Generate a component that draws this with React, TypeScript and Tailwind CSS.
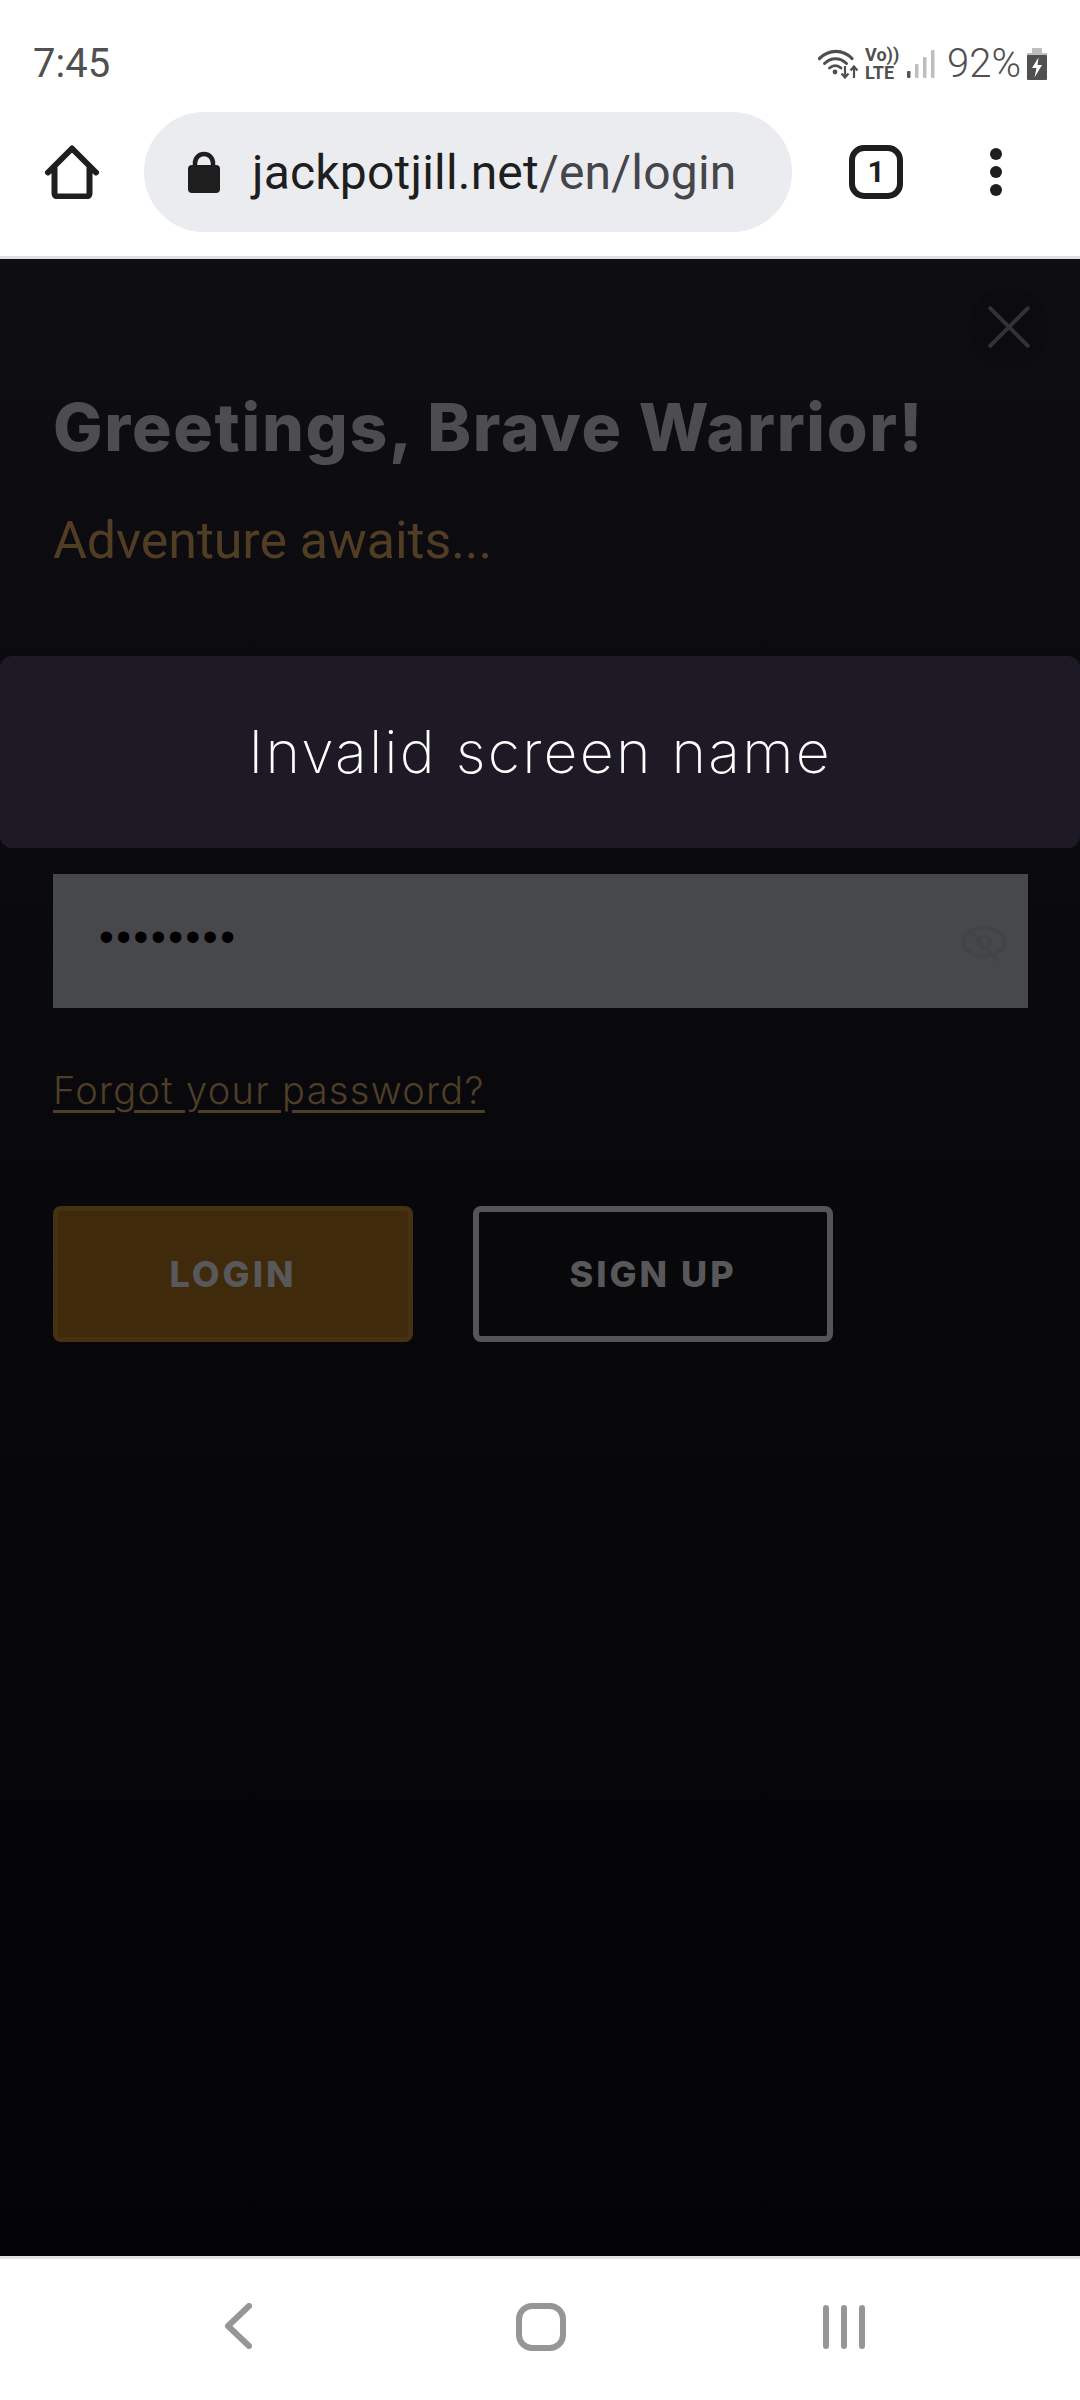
import React from "react";

const inter = "font-['Inter',sans-serif]";
const roboto = "font-['Roboto',sans-serif]";

function Wifi() {
  return (
    <svg width="40" height="30" viewBox="0 0 40 30" fill="none" className="text-[#4f4f4f]">
      <path d="M1.5 9.5C11 0 25 0 34 9.5" stroke="currentColor" strokeWidth="3.2" strokeLinecap="round" />
      <path d="M6.5 14.5C13 8 22 8 28.5 14.5" stroke="currentColor" strokeWidth="3" strokeLinecap="round" />
      <path d="M11.5 19C15 16 19.5 16 23 19" stroke="currentColor" strokeWidth="2.8" strokeLinecap="round" />
      <circle cx="17" cy="23" r="2.4" fill="currentColor" />
      <path d="M27 17v11M23.5 24.5L27 28.5l3.500-4" stroke="currentColor" strokeWidth="2.2" />
      <path d="M36 29V18M32.500 21.500L36 17.500l3.500 4" stroke="currentColor" strokeWidth="2.2" />
    </svg>
  );
}

function Signal() {
  return (
    <svg width="28" height="30" viewBox="0 0 28 30">
      <rect x="0" y="22" width="3.500" height="7" rx="1" fill="#555555" />
      <rect x="8" y="15" width="3.500" height="14" rx="1" fill="#bdbdbd" />
      <rect x="16" y="8" width="3.500" height="21" rx="1" fill="#bdbdbd" />
      <rect x="24" y="1" width="3.500" height="28" rx="1" fill="#bdbdbd" />
    </svg>
  );
}

function Battery() {
  return (
    <svg width="20" height="32" viewBox="0 0 20 32">
      <rect x="5" y="0" width="10" height="5" fill="#bdbdbd" />
      <rect x="0" y="5" width="20" height="4" fill="#bdbdbd" />
      <rect x="0" y="7" width="20" height="25" rx="1" fill="#505050" />
      <path d="M11.500 9.500L5 20h4.500L7.500 29.500 15 17h-4.500z" fill="#ffffff" />
    </svg>
  );
}

function Home() {
  return (
    <svg width="54" height="54" viewBox="0 0 54 54" fill="none">
      <path
        d="M3 27.500L27 3.500l24 24M9.500 23v25.500a3 3 0 0 0 3 3h29a3 3 0 0 0 3-3V23"
        stroke="#1e1e1e"
        strokeWidth="6"
        strokeLinecap="round"
        strokeLinejoin="round"
      />
    </svg>
  );
}

function Lock() {
  return (
    <svg width="32" height="42" viewBox="0 0 32 42" fill="none">
      <path d="M7 16V12a9 9 0 0 1 18 0v4" stroke="#1e1e1e" strokeWidth="4.500" />
      <rect x="0" y="14" width="32" height="28" rx="4" fill="#1e1e1e" />
    </svg>
  );
}

function EyeOff() {
  return (
    <svg className="mt-[14px]" width="48" height="38" viewBox="0 0 48 38" fill="none" stroke="#434448" strokeWidth="3.500">
      <ellipse cx="24" cy="17" rx="21" ry="14" />
      <circle cx="24" cy="17" r="6" />
      <path d="M8 3L38 36" />
    </svg>
  );
}

export default function App() {
  return (
    <div className="flex h-[2400px] w-[1080px] flex-col overflow-hidden bg-white">
      <div className={`flex h-[112px] items-center justify-between pl-[33px] pr-[33px] pt-[15px] text-[40px] font-light text-[#505050] ${roboto}`}>
        <span className="font-normal leading-none">7:45</span>
        <div className="flex items-center">
          <Wifi />
          <div className={`ml-[7px] flex w-[32px] flex-col text-[18px] font-bold leading-[18px] text-[#505050] ${roboto}`}>
            <span>Vo))</span>
            <span>LTE</span>
          </div>
          <div className="ml-[10px]">
            <Signal />
          </div>
          <span className="ml-[12px] leading-none">92%</span>
          <div className="ml-[6px]">
            <Battery />
          </div>
        </div>
      </div>

      <div className="flex h-[147px] items-start border-b-[3px] border-[#e0e0e0]">
        <div className="ml-[45px] mt-[33px]">
          <Home />
        </div>
        <div className={`ml-[45px] flex h-[120px] w-[648px] items-center rounded-full bg-[#ebecf0] pl-[44px] text-[48px] tracking-[0.2px] ${roboto}`}>
          <Lock />
          <span className="ml-[32px] mt-[2px] whitespace-nowrap leading-none text-[#1e1e1e]">
            jackpotjill.net<span className="text-[#46464a]">/en/login</span>
          </span>
        </div>
        <div className={`ml-[57px] mt-[33px] flex h-[54px] w-[54px] items-center justify-center rounded-[15px] border-[6px] border-[#1e1e1e] text-[30px] font-bold leading-none text-[#1e1e1e] ${roboto}`}>
          1
        </div>
        <div className="ml-[87px] mt-[36px] flex flex-col gap-[6px]">
          <div className="h-[12px] w-[12px] rounded-full bg-[#1e1e1e]" />
          <div className="h-[12px] w-[12px] rounded-full bg-[#1e1e1e]" />
          <div className="h-[12px] w-[12px] rounded-full bg-[#1e1e1e]" />
        </div>
      </div>

      <div className="relative flex flex-1 flex-col bg-gradient-to-b from-[#0e0d11] to-[#040406] pl-[53px] pr-[52px]">
        <div className="absolute right-[31px] top-[28px] flex h-[80px] w-[80px] items-center justify-center rounded-full bg-[#0c0b0f]">
          <svg width="42" height="42" viewBox="0 0 42 42" fill="none" stroke="#333236" strokeWidth="4">
            <path d="M1 1L41 41M41 1L1 41" />
          </svg>
        </div>

        <h1 className={`mt-[132px] whitespace-nowrap text-[66px] font-extrabold leading-[72px] tracking-[1.700px] text-[#4d4d4f] ${inter}`}>
          Greetings, Brave Warrior!
        </h1>
        <p className={`mt-[48px] text-[52px] leading-[60px] tracking-[-0.1px] text-[#503d24] ${roboto}`}>Adventure awaits...</p>

        <div className="mt-[303px] flex h-[134px] items-center justify-between bg-[#47484c] pb-[8px] pl-[46px] pr-[20px]">
          <span className="font-['Liberation_Sans',sans-serif] text-[42px] leading-none tracking-[2.600px] text-black">••••••••</span>
          <EyeOff />
        </div>

        <a className={`mt-[57px] self-start text-[38px] font-light leading-[50px] tracking-[1.300px] text-[#4f3e27] underline underline-offset-[6px] ${inter}`}>
          Forgot your password?
        </a>

        <div className="mt-[91px] flex gap-[60px]">
          <button className={`flex h-[136px] w-[360px] items-center justify-center rounded-[8px] border-[5px] border-[#463213] bg-[#3f2a0c] text-[36px] font-extrabold tracking-[3px] text-[#58585a] ${inter}`}>
            LOGIN
          </button>
          <button className={`flex h-[136px] w-[360px] items-center justify-center rounded-[8px] border-[6px] border-[#555557] text-[36px] font-extrabold tracking-[3px] text-[#58585a] ${inter}`}>
            SIGN UP
          </button>
        </div>

        <div className={`absolute left-0 right-0 top-[397px] flex h-[192px] items-center justify-center rounded-[12px] bg-[#1e1a25] text-[59px] font-extralight tracking-[2.200px] text-white ${inter}`}>
          Invalid screen name
        </div>
      </div>

      <div className="flex h-[144px] items-start border-t-[3px] border-[#e2e2e2] bg-white">
        <svg className="ml-[224px] mt-[44px]" width="28" height="46" viewBox="0 0 28 46" fill="none" stroke="#969696" strokeWidth="6" strokeLinecap="round" strokeLinejoin="round">
          <path d="M25 3L4 23l21 20" />
        </svg>
        <div className="ml-[264px] mt-[44px] h-[48px] w-[50px] rounded-[16px] border-[6px] border-[#969696]" />
        <div className="ml-[257px] mt-[46px] flex gap-[12px]">
          <div className="h-[44px] w-[6px] rounded-full bg-[#969696]" />
          <div className="h-[44px] w-[6px] rounded-full bg-[#969696]" />
          <div className="h-[44px] w-[6px] rounded-full bg-[#969696]" />
        </div>
      </div>
    </div>
  );
}
